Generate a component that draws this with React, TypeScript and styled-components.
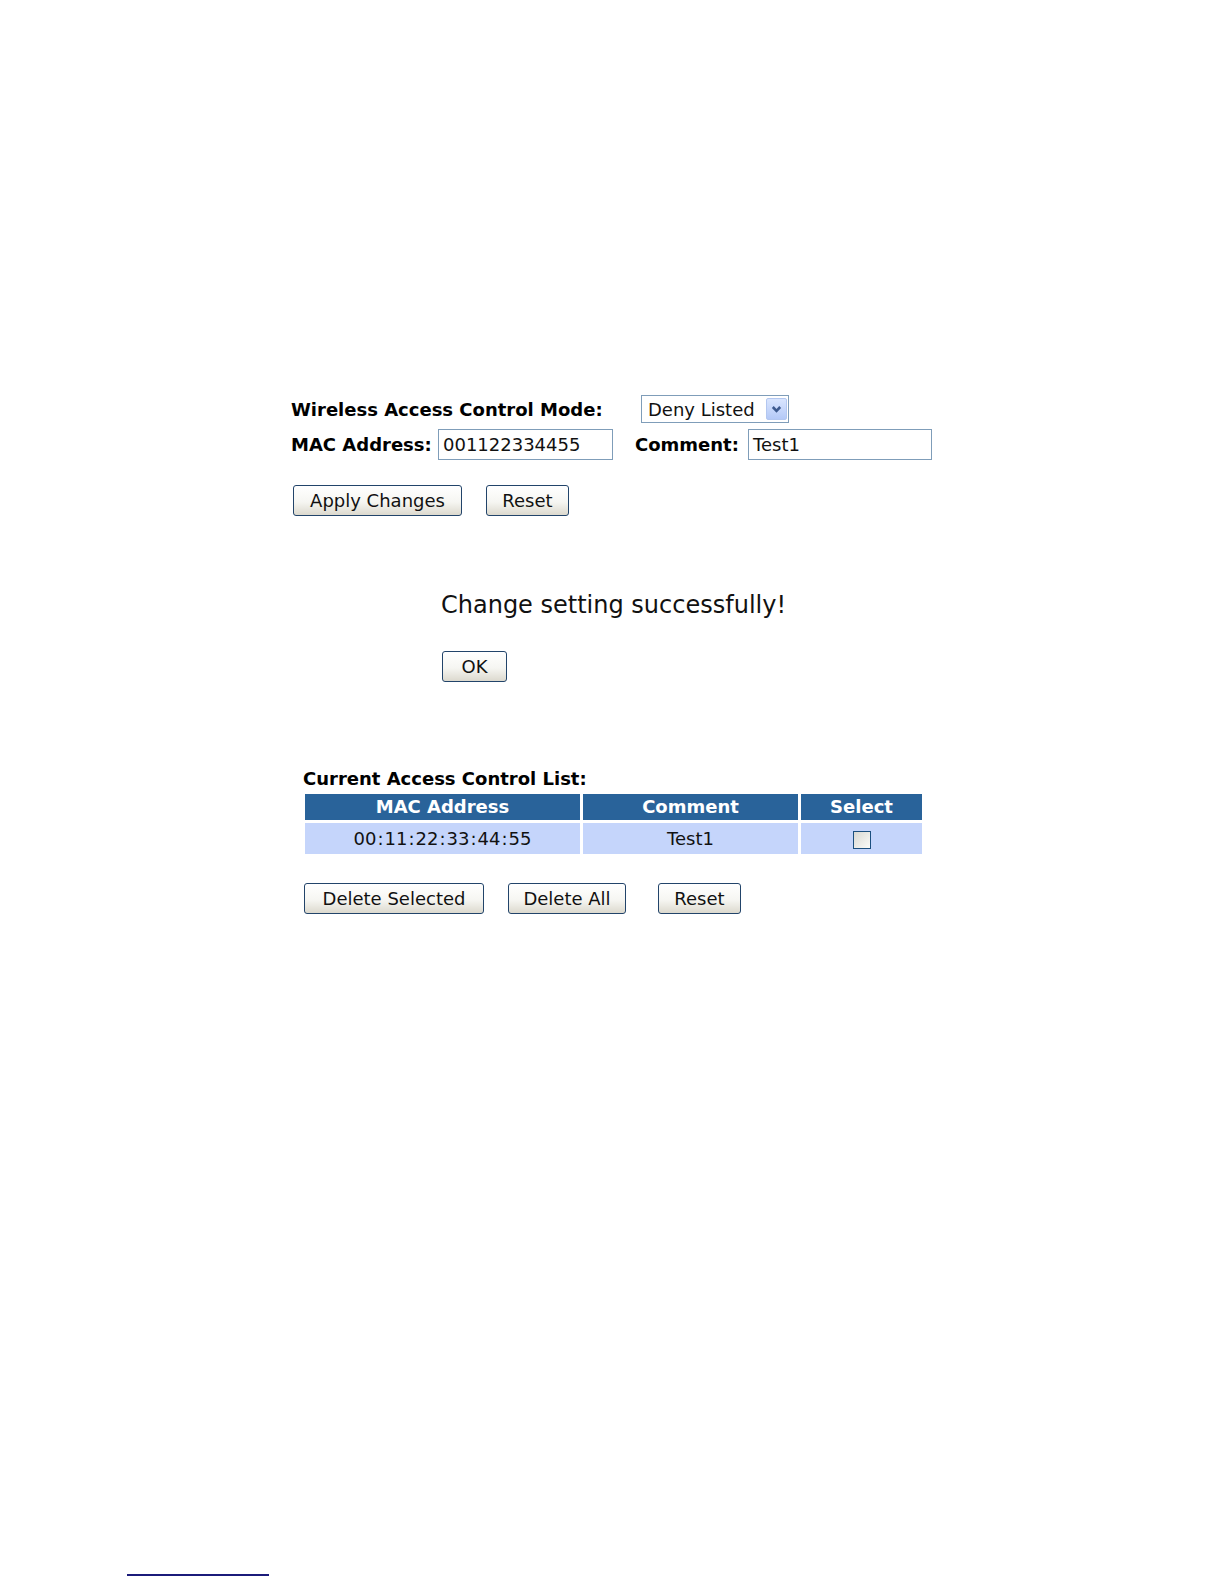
import React from "react";
import styled, { createGlobalStyle } from "styled-components";

const Global = createGlobalStyle`
  html, body { margin: 0; padding: 0; background: #fff; }
  body { font-family: "DejaVu Sans", Verdana, sans-serif; color: #000; }
`;

const Page = styled.div`
  min-height: 1584px;
  box-sizing: border-box;
  padding: 395px 0 8px 0;
  display: flex;
  flex-direction: column;
  font-size: 18px;
`;

const Content = styled.div`
  margin-left: 291px;
  display: flex;
  flex-direction: column;
  align-items: flex-start;
`;

const Row = styled.div<{ $mt?: number }>`
  display: flex;
  align-items: center;
  margin-top: ${(p) => p.$mt ?? 0}px;
`;

const Label = styled.span<{ $w?: number; $ml?: number }>`
  font-weight: bold;
  font-size: 18px;
  white-space: nowrap;
  ${(p) => (p.$w ? `width: ${p.$w}px;` : "")}
  margin-left: ${(p) => p.$ml ?? 0}px;
`;

const TextInput = styled.div<{ $w: number; $ml?: number }>`
  width: ${(p) => p.$w}px;
  height: 31px;
  box-sizing: border-box;
  border: 1px solid #7f9db9;
  margin-left: ${(p) => p.$ml ?? 0}px;
  padding: 0 4px;
  display: flex;
  align-items: center;
  font-size: 18px;
  color: #111;
  background: #fff;
`;

const Select = styled.div`
  width: 148px;
  height: 28px;
  box-sizing: border-box;
  border: 1px solid #7f9db9;
  display: flex;
  align-items: center;
  justify-content: space-between;
  padding: 0 1px 0 6px;
  font-size: 18px;
  color: #111;
`;

const SelectArrow = styled.span`
  width: 21px;
  height: 22px;
  box-sizing: border-box;
  border: 1px solid #b3c7f0;
  border-radius: 2px;
  background: linear-gradient(#d9e5fe, #b4c9f7);
  display: flex;
  align-items: center;
  justify-content: center;
`;

const ButtonRow = styled.div<{ $mt: number; $ml?: number }>`
  display: flex;
  margin-top: ${(p) => p.$mt}px;
  margin-left: ${(p) => p.$ml ?? 0}px;
`;

const Button = styled.div<{ $w: number; $ml?: number }>`
  width: ${(p) => p.$w}px;
  height: 31px;
  box-sizing: border-box;
  margin-left: ${(p) => p.$ml ?? 0}px;
  border: 1px solid #22446a;
  border-radius: 3px;
  background: linear-gradient(#ffffff 0%, #f6f6f2 55%, #dcd9ce 100%);
  display: flex;
  align-items: center;
  justify-content: center;
  font-size: 18px;
  color: #111;
`;

const Message = styled.div`
  margin-top: 74px;
  margin-left: 150px;
  font-size: 24px;
  line-height: 30px;
  color: #111;
`;

const Title = styled.div`
  margin-top: 87px;
  margin-left: 12px;
  font-weight: bold;
  font-size: 18px;
  line-height: 20px;
`;

const Table = styled.table`
  margin-top: 2px;
  margin-left: 11px;
  border-collapse: separate;
  border-spacing: 3px;
`;

const Th = styled.th<{ $w: number }>`
  width: ${(p) => p.$w}px;
  height: 26px;
  padding: 0;
  background: #29639a;
  color: #fff;
  font-weight: bold;
  font-size: 18px;
  line-height: 20px;
  text-align: center;
`;

const Td = styled.td`
  height: 31px;
  padding: 0;
  background: #c5d5fb;
  font-size: 18px;
  line-height: 20px;
  text-align: center;
  color: #111;
`;

const Colon = styled.span`
  padding: 0 1px;
`;

const Checkbox = styled.span`
  display: inline-block;
  vertical-align: middle;
  width: 18px;
  height: 18px;
  box-sizing: border-box;
  border: 1px solid #1c4f7e;
  background: linear-gradient(135deg, #d8d8d2, #fbfbf8);
`;

const Footer = styled.div`
  margin-top: auto;
  margin-left: 127px;
  width: 142px;
  height: 2px;
  background: #1b1b7a;
`;

const mac = "00:11:22:33:44:55".split(":");

export default function App() {
  return (
    <>
      <Global />
      <Page>
        <Content>
          <Row>
            <Label $w={350}>Wireless Access Control Mode:</Label>
            <Select>
              <span>Deny Listed</span>
              <SelectArrow>
                <svg width="11" height="9" viewBox="0 0 11 9">
                  <path d="M1.8 2 L5.5 5.8 L9.2 2" fill="none" stroke="#3d5a8e" strokeWidth="2.6" />
                </svg>
              </SelectArrow>
            </Select>
          </Row>
          <Row $mt={6}>
            <Label $w={147}>MAC Address:</Label>
            <TextInput $w={175}>001122334455</TextInput>
            <Label $w={113} $ml={22}>Comment:</Label>
            <TextInput $w={184}>Test1</TextInput>
          </Row>
          <ButtonRow $mt={25} $ml={2}>
            <Button $w={169}>Apply Changes</Button>
            <Button $w={83} $ml={24}>Reset</Button>
          </ButtonRow>
          <Message>Change setting successfully!</Message>
          <ButtonRow $mt={31} $ml={151}>
            <Button $w={65}>OK</Button>
          </ButtonRow>
          <Title>Current Access Control List:</Title>
          <Table>
            <thead>
              <tr>
                <Th $w={275}>MAC Address</Th>
                <Th $w={215}>Comment</Th>
                <Th $w={121}>Select</Th>
              </tr>
            </thead>
            <tbody>
              <tr>
                <Td>
                  {mac.map((part, i) => (
                    <React.Fragment key={i}>
                      {i > 0 && <Colon>:</Colon>}
                      {part}
                    </React.Fragment>
                  ))}
                </Td>
                <Td>Test1</Td>
                <Td>
                  <Checkbox />
                </Td>
              </tr>
            </tbody>
          </Table>
          <ButtonRow $mt={26} $ml={13}>
            <Button $w={180}>Delete Selected</Button>
            <Button $w={118} $ml={24}>Delete All</Button>
            <Button $w={83} $ml={32}>Reset</Button>
          </ButtonRow>
        </Content>
        <Footer />
      </Page>
    </>
  );
}
